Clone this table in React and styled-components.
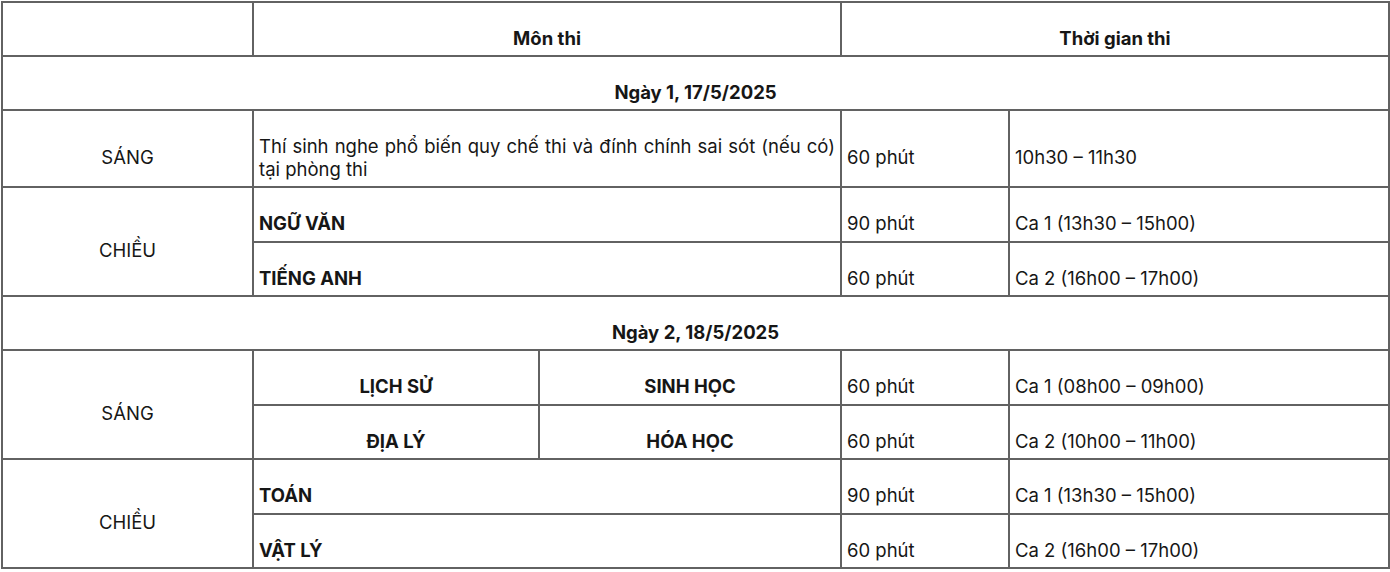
import React from 'react';
import styled, { createGlobalStyle } from 'styled-components';

const GlobalStyle = createGlobalStyle`
  html, body {
    margin: 0;
    padding: 0;
    background: #fff;
  }
  body {
    font-family: Inter, "Noto Sans", "Liberation Sans", sans-serif;
    color: #161616;
  }
`;

const Wrap = styled.div`
  padding: 1px;
`;

const Table = styled.table`
  width: 1387px;
  border-collapse: collapse;
  table-layout: fixed;
  font-size: 18.5px;
  line-height: 23px;
`;

const Row = styled.tr`
  height: ${props => props.h}px;
`;

const Cell = styled.td`
  border: 2px solid #626262;
  padding: 18px 5px 0 5px;
  vertical-align: middle;
  text-align: ${props => (props.center ? 'center' : props.justify ? 'justify' : 'left')};
  font-weight: ${props => (props.bold ? 700 : 400)};
`;

const columns = [251, 286, 302, 168, 380];

const DayRow = ({ label, h }) => (
  <Row h={h}>
    <Cell colSpan={5} center bold>
      {label}
    </Cell>
  </Row>
);

const App = () => (
  <Wrap>
    <GlobalStyle />
    <Table>
      <colgroup>
        {columns.map((w, i) => (
          <col key={i} style={{ width: w }} />
        ))}
      </colgroup>
      <tbody>
        <Row h={54}>
          <Cell />
          <Cell colSpan={2} center bold>Môn thi</Cell>
          <Cell colSpan={2} center bold>Thời gian thi</Cell>
        </Row>
        <DayRow label="Ngày 1, 17/5/2025" h={54} />
        <Row h={77}>
          <Cell center>SÁNG</Cell>
          <Cell colSpan={2} justify>
            Thí sinh nghe phổ biến quy chế thi và đính chính sai sót (nếu có)
            tại phòng thi
          </Cell>
          <Cell>60 phút</Cell>
          <Cell>10h30 – 11h30</Cell>
        </Row>
        <Row h={55}>
          <Cell rowSpan={2} center>CHIỀU</Cell>
          <Cell colSpan={2} bold>NGỮ VĂN</Cell>
          <Cell>90 phút</Cell>
          <Cell>Ca 1 (13h30 – 15h00)</Cell>
        </Row>
        <Row h={54}>
          <Cell colSpan={2} bold>TIẾNG ANH</Cell>
          <Cell>60 phút</Cell>
          <Cell>Ca 2 (16h00 – 17h00)</Cell>
        </Row>
        <DayRow label="Ngày 2, 18/5/2025" h={54} />
        <Row h={55}>
          <Cell rowSpan={2} center>SÁNG</Cell>
          <Cell center bold>LỊCH SỬ</Cell>
          <Cell center bold>SINH HỌC</Cell>
          <Cell>60 phút</Cell>
          <Cell>Ca 1 (08h00 – 09h00)</Cell>
        </Row>
        <Row h={54}>
          <Cell center bold>ĐỊA LÝ</Cell>
          <Cell center bold>HÓA HỌC</Cell>
          <Cell>60 phút</Cell>
          <Cell>Ca 2 (10h00 – 11h00)</Cell>
        </Row>
        <Row h={55}>
          <Cell rowSpan={2} center>CHIỀU</Cell>
          <Cell colSpan={2} bold>TOÁN</Cell>
          <Cell>90 phút</Cell>
          <Cell>Ca 1 (13h30 – 15h00)</Cell>
        </Row>
        <Row h={54}>
          <Cell colSpan={2} bold>VẬT LÝ</Cell>
          <Cell>60 phút</Cell>
          <Cell>Ca 2 (16h00 – 17h00)</Cell>
        </Row>
      </tbody>
    </Table>
  </Wrap>
);

export default App;
